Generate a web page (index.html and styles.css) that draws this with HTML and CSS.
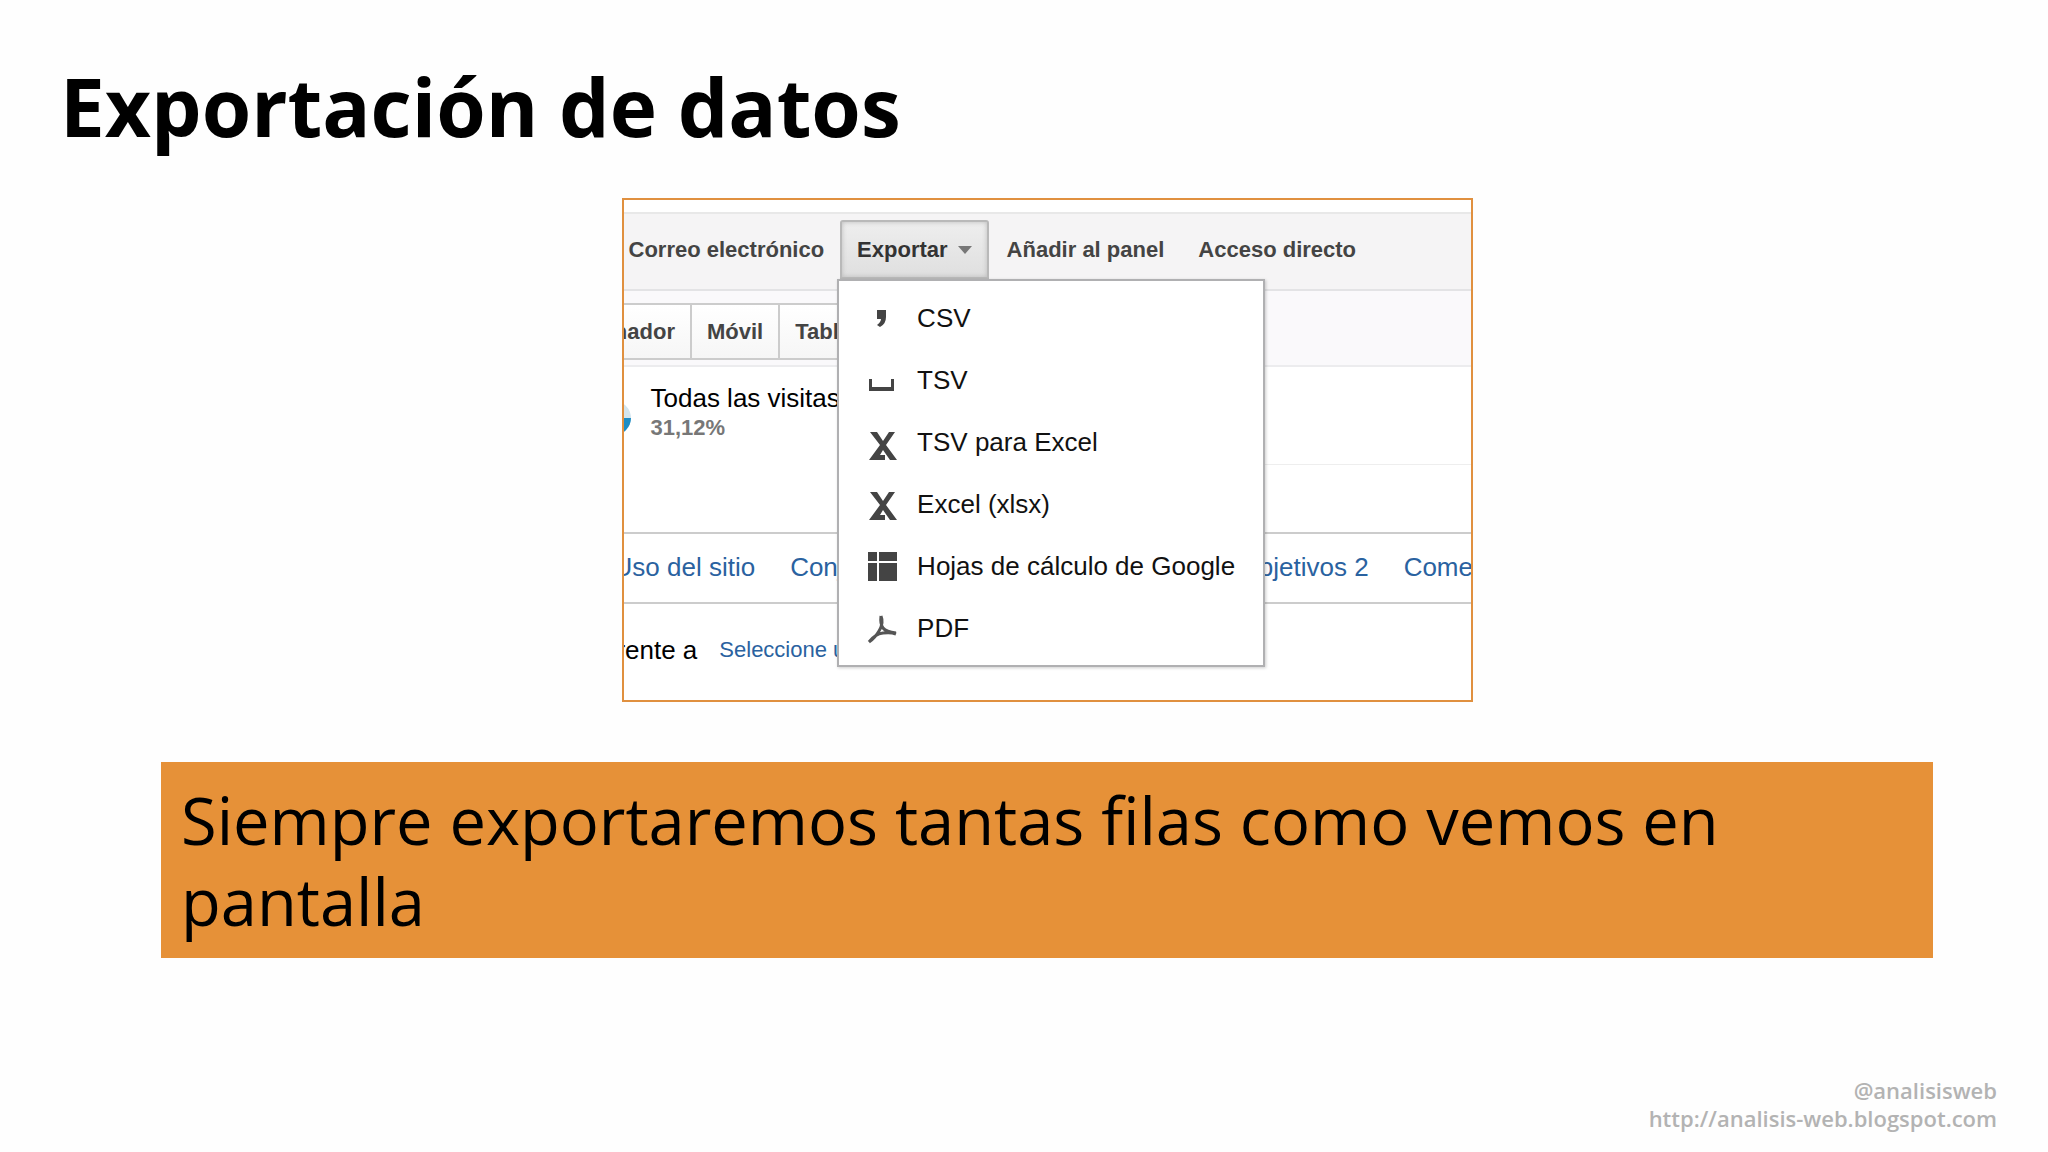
FILE: index.html
```html
<!DOCTYPE html>
<html lang="es">
<head>
    <meta charset="UTF-8">
    <meta name="viewport" content="width=device-width, initial-scale=1.0">
    <title>Exportación de datos</title>
    <link rel="stylesheet" href="styles.css">
</head>
<body>

    <h1>Exportación de datos</h1>

    <main>
        <div class="capture">

            <div class="toolbar">
                <button class="tool">Correo electrónico</button>
                <div class="export">
                    <button class="tool open">Exportar <span class="caret"></span></button>
                    <ul class="menu">
                        <li><button>
                            <svg viewBox="0 0 30 30"><path d="M10 7h9v7q0 7-6 10l-3-2q4-3 4-6h-4z"/></svg>
                            CSV
                        </button></li>
                        <li><button>
                            <svg viewBox="0 0 30 30"><path d="M2 14h3v8h19v-8h3v12H2z"/></svg>
                            TSV
                        </button></li>
                        <li><button>
                            <svg viewBox="0 0 30 30"><path d="M3 5h7l6 9 6-9h6L19 18l11 15h-7l-7-10-3 5h5v5H2l11-15z"/></svg>
                            TSV para Excel
                        </button></li>
                        <li><button>
                            <svg viewBox="0 0 30 30"><path d="M3 3h7l6 9 6-9h6L19 16l11 15h-7l-7-10-3 5h5v5H2l11-15z"/></svg>
                            Excel (xlsx)
                        </button></li>
                        <li><button>
                            <svg viewBox="0 0 30 30"><path d="M1 1h9v9H1zM12 1h18v9H12zM1 12h9v18H1zM12 12h18v18H12z"/></svg>
                            Hojas de cálculo de Google
                        </button></li>
                        <li><button>
                            <svg viewBox="0 0 30 30"><path class="line" d="M14 3q-1 8 2 12t13 5M14 3q3 7-2 15-4 7-10 11M2 29q6-8 14-9t13 1"/></svg>
                            PDF
                        </button></li>
                    </ul>
                </div>
                <button class="tool">Añadir al panel</button>
                <button class="tool">Acceso directo</button>
            </div>

            <div class="tabs">
                <button>Ordenador</button>
                <button>Móvil</button>
                <button>Tableta</button>
            </div>

            <div class="visits">
                <svg class="pie" viewBox="0 0 34 34">
                    <circle cx="17" cy="17" r="17" fill="#d3e5ee"/>
                    <path d="M17 17h17a17 17 0 0 1-17 17z" fill="#1c8cc4"/>
                </svg>
                <div class="segment">
                    Todas las visitas
                    <strong>31,12%</strong>
                </div>
                <div class="empty"></div>
            </div>

            <nav>
                <a href="#">Uso del sitio</a>
                <a href="#">Conjunto de objetivos 1</a>
                <a href="#">Conjunto de objetivos 2</a>
                <a href="#">Comercio electrónico</a>
            </nav>

            <div class="compare">
                <span>Frente a</span>
                <a href="#">Seleccione una métrica</a>
            </div>

        </div>

        <p class="note">Siempre exportaremos tantas filas como vemos en pantalla</p>
    </main>

    <footer>
        <a href="#">@analisisweb</a>
        <a href="#">http://analisis-web.blogspot.com</a>
    </footer>

</body>
</html>
```
FILE: styles.css
```css
* {
    box-sizing: border-box;
}

body {
    font-family: 'Trebuchet MS', 'Open Sans', sans-serif;
    color: #000;
    background-color: #fefefe;
    margin: 0;
    min-height: 100vh;
    display: flex;
    flex-direction: column;
}

h1 {
    font-size: 80px;
    line-height: 100px;
    margin: 56px 60px 42px;
}

main {
    padding: 0 115px 0 161px;
}

button {
    font: inherit;
    color: inherit;
    background: none;
    border: none;
    padding: 0;
    cursor: pointer;
}

a {
    color: #2a62a0;
    text-decoration: none;
}

.capture {
    font-family: 'Liberation Sans', Arial, sans-serif;
    font-size: 26px;
    line-height: 30px;
    max-width: 851px;
    margin: 0 auto;
    padding-top: 12px;
    border: 2px solid #e0903f;
    background-color: #fff;
    overflow: hidden;
    white-space: nowrap;
}

.toolbar {
    display: flex;
    padding: 6px 0 10px 5px;
    border-top: 2px solid #e8e8e8;
    border-bottom: 2px solid #e3e3e5;
    background-color: #f5f4f5;
}

.tool {
    height: 59px;
    font-size: 22px;
    font-weight: bold;
    color: #444;
    margin-right: 34px;
}

.export {
    position: relative;
    margin: 0 18px 0 -18px;
}

.open {
    display: flex;
    align-items: center;
    gap: 10px;
    margin: 0;
    padding: 0 15px 0 15px;
    color: #333;
    border: 2px solid #b9b9b9;
    border-radius: 3px 3px 0 0;
    background: linear-gradient(#eee, #dfdfdf);
    box-shadow: inset 0 0 5px #bbb;
}

.caret {
    border: 7px solid transparent;
    border-top: 8px solid #777;
    border-bottom: none;
}

/* drop-down of export formats */
.menu {
    position: absolute;
    top: 100%;
    left: -3px;
    z-index: 1;
    width: 428px;
    margin: 0;
    padding: 6px 0;
    list-style: none;
    border: 2px solid #b0b0b2;
    background-color: #fff;
    box-shadow: 1px 1px 3px rgba(0, 0, 0, 0.2);
}

.menu button {
    display: flex;
    align-items: center;
    gap: 20px;
    width: 100%;
    height: 62px;
    padding-left: 28px;
    color: #111;
}

.menu svg {
    width: 30px;
    height: 30px;
    fill: #444;
    overflow: visible;
}

.menu .line {
    fill: none;
    stroke: #555;
    stroke-width: 3;
}

.tabs {
    display: flex;
    padding: 12px 0 5px;
    border-bottom: 2px solid #ececee;
    background-color: #faf9fb;
}

.tabs button {
    height: 57px;
    padding: 0 15px;
    font-size: 22px;
    font-weight: bold;
    color: #444;
    border: 2px solid #ccc;
    border-left: none;
    background: linear-gradient(#fff, #f6f6f6);
}

.tabs button:first-child {
    margin-left: -76px;
}

.visits {
    display: flex;
    height: 165px;
}

.pie {
    width: 34px;
    height: 34px;
    margin: 34px 20px 0 -27px;
}

.segment {
    padding-top: 16px;
}

.segment strong {
    display: block;
    font-size: 22px;
    color: #777;
}

.empty {
    width: 240px;
    height: 98px;
    margin-left: auto;
    border-bottom: 1px solid #eee;
}

nav {
    display: flex;
    gap: 35px;
    padding: 18px 0 20px;
    margin-left: -10px;
    border-top: 2px solid #ccc;
    border-bottom: 2px solid #ccc;
}

.compare {
    display: flex;
    align-items: center;
    gap: 22px;
    padding: 31px 0 35px;
    margin-left: -23px;
}

.compare a {
    font-size: 22px;
}

.note {
    margin: 60px 0 0;
    padding: 18px 20px 16px;
    font-size: 65px;
    line-height: 81px;
    background-color: #e69138;
}

footer {
    display: flex;
    flex-direction: column;
    align-items: flex-end;
    margin-top: auto;
    padding: 0 51px 20px;
    font-size: 22px;
    line-height: 28px;
    font-weight: 600;
}

footer a {
    color: #b3b3b3;
}
```
